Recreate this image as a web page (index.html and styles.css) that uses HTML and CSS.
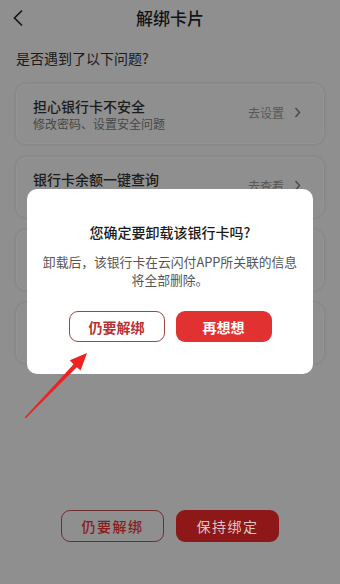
FILE: index.html
```html
<!DOCTYPE html>
<html lang="zh">
<head>
<meta charset="utf-8">
<title>解绑卡片</title>
<link rel="stylesheet" href="styles.css">
</head>
<body>
<div class="page">
  <header class="topbar">
    <svg class="back" width="12" height="18" viewBox="0 0 12 18"><path d="M10 1.5 L2.5 9 L10 16.5" fill="none" stroke="#161616" stroke-width="1.7"/></svg>
    <h1 class="title">解绑卡片</h1>
  </header>
  <p class="question">是否遇到了以下问题?</p>
  <div class="cards">
    <div class="card">
      <div class="card-text">
        <div class="card-title">担心银行卡不安全</div>
        <div class="card-sub">修改密码、设置安全问题</div>
      </div>
      <div class="card-action">去设置<svg class="chev" width="7" height="11" viewBox="0 0 7 11"><path d="M1.5 1 L5.5 5.5 L1.5 10" fill="none" stroke="#4a4a4a" stroke-width="1.5"/></svg></div>
    </div>
    <div class="card">
      <div class="card-text">
        <div class="card-title">银行卡余额一键查询</div>
        <div class="card-sub">随时查看余额</div>
      </div>
      <div class="card-action">去查看<svg class="chev" width="7" height="11" viewBox="0 0 7 11"><path d="M1.5 1 L5.5 5.5 L1.5 10" fill="none" stroke="#4a4a4a" stroke-width="1.5"/></svg></div>
    </div>
    <div class="card"></div>
    <div class="card"></div>
  </div>
  <div class="bottom-actions">
    <button class="btn-outline-dim">仍要解绑</button>
    <button class="btn-fill-dim">保持绑定</button>
  </div>
</div>

<div class="modal">
  <div class="modal-title">您确定要卸载该银行卡吗?</div>
  <div class="modal-body">
    <p>卸载后，该银行卡在云闪付APP所关联的信息</p>
    <p>将全部删除。</p>
  </div>
  <div class="modal-actions">
    <button class="btn-outline">仍要解绑</button>
    <button class="btn-fill">再想想</button>
  </div>
</div>

<svg class="arrow" width="80" height="80" viewBox="0 0 80 80">
  <polygon points="1.6,68.6 50.6,15.2 46.8,11.2 64,4 57.6,21.4 53.8,18.2 2.6,69.6" fill="#ee2222"/>
</svg>
</body>
</html>
```
FILE: styles.css
```css
* { box-sizing: border-box; margin: 0; padding: 0; }
html, body { width: 340px; height: 584px; overflow: hidden; }
body {
  background: #8f8f8f;
  font-family: "Noto Sans CJK SC", "Noto Sans", sans-serif;
  color: #161616;
  position: relative;
}
.page { height: 584px; display: flex; flex-direction: column; }
.topbar {
  height: 35px;
  position: relative;
  display: flex;
  align-items: center;
  justify-content: center;
}
.back { position: absolute; left: 12px; top: 9px; }
.title { font-size: 17px; font-weight: 500; line-height: 24px; color: #141414; }
.question {
  font-size: 14px;
  line-height: 20px;
  padding: 13px 0 0 16px;
  color: #1a1a1a;
}
.cards {
  display: flex;
  flex-direction: column;
  gap: 13px;
  padding: 16px 16px 0 16px;
}
.card {
  height: 60px;
  border-radius: 10px;
  background: #8f8f8f;
  box-shadow: 0 0 3px 1px rgba(0,0,0,0.07), inset 0 0 0 1px rgba(255,255,255,0.05);
  display: flex;
  align-items: center;
  justify-content: space-between;
  padding: 0 23px 0 17px;
}
.card-title { font-size: 14px; line-height: 18px; color: #1c1c1c; font-weight: 500; }
.card-sub { font-size: 12px; line-height: 16px; color: #474747; margin-top: 1px; }
.card-action { font-size: 12px; color: #585858; display: flex; align-items: center; gap: 10px; margin-top: -3px; }
.chev { display: block; }
.bottom-actions {
  margin-top: auto;
  margin-bottom: 42px;
  display: flex;
  justify-content: center;
  gap: 12px;
}
.btn-outline-dim, .btn-fill-dim {
  width: 103px;
  height: 32px;
  border-radius: 9px;
  font-family: inherit;
  font-size: 14px;
  letter-spacing: 1.5px;
}
.btn-outline-dim { background: transparent; border: 1px solid #6f3030; color: #8a1c1c; font-weight: 500; }
.btn-fill-dim { background: #8e1818; border: none; color: #d8c8c8; }
.modal {
  position: absolute;
  left: 27px;
  top: 189px;
  width: 286px;
  height: 185px;
  background: #fff;
  border-radius: 10px;
  display: flex;
  flex-direction: column;
  align-items: center;
  padding-top: 33px;
}
.modal-title { font-size: 14px; font-weight: 500; line-height: 20px; color: #1a1a1a; }
.modal-body {
  margin-top: 11px;
  font-size: 12.8px;
  line-height: 18px;
  color: #555;
  text-align: center;
}
.modal-actions { display: flex; gap: 11px; margin-top: 22px; }
.btn-outline, .btn-fill {
  width: 96px;
  height: 31px;
  border-radius: 9px;
  font-family: inherit;
  font-size: 14px;
  font-weight: 700;
}
.btn-outline { background: #fff; border: 1px solid #a04444; color: #b83333; }
.btn-fill { background: #e13131; border: none; color: #fff; }
.arrow { position: absolute; left: 23px; top: 349px; }
```
